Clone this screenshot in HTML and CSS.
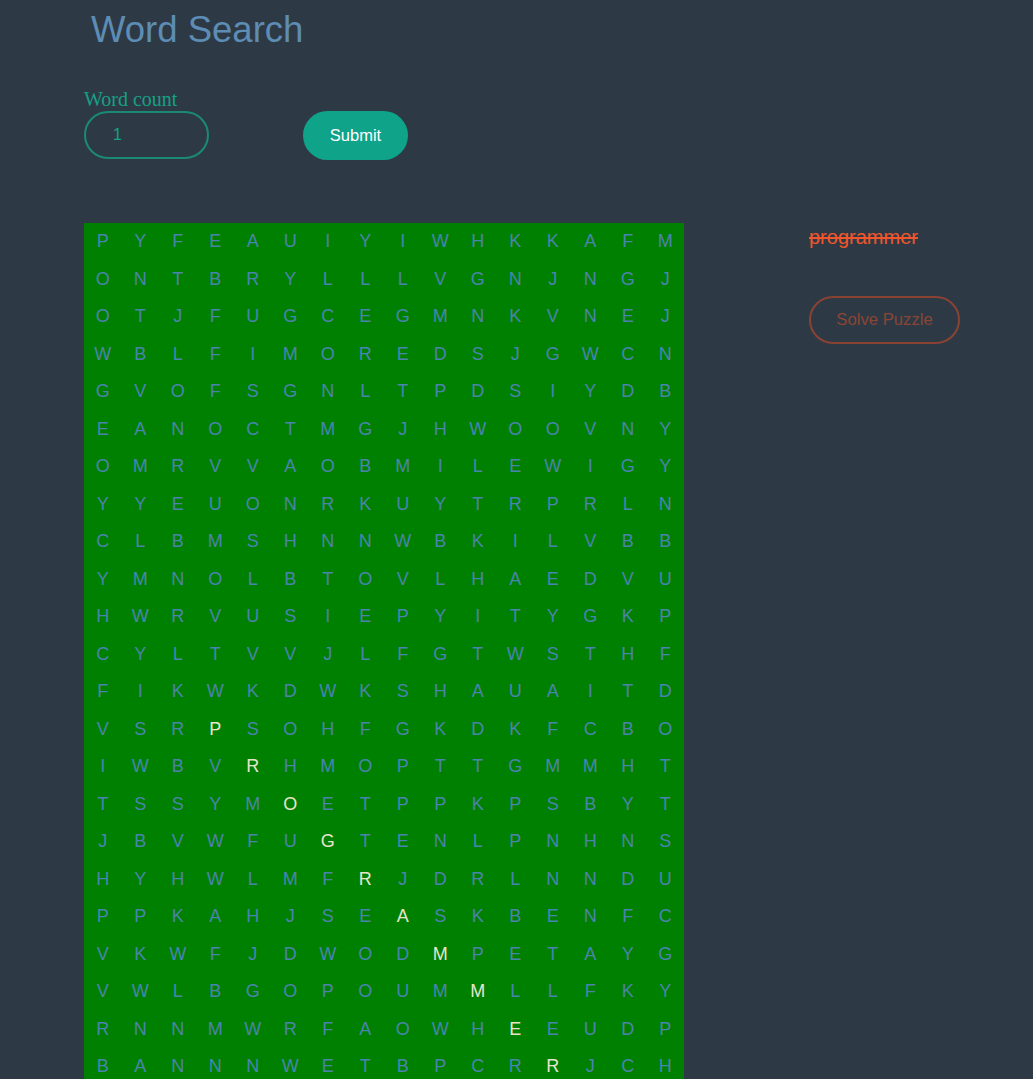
FILE: index.html
```html
<!DOCTYPE html>
<html lang="en">
<head>
<meta charset="utf-8">
<title>Word Search</title>
<link rel="stylesheet" href="styles.css">
</head>
<body>
<div class="page">
  <h1 class="title">Word Search</h1>
  <form class="controls">
    <label class="field-label" for="count">Word count</label>
    <div class="control-row">
      <input class="count-input" id="count" type="text" value="1">
      <button class="submit-btn" type="button">Submit</button>
    </div>
  </form>
  <div class="board">
    <div class="grid" id="grid"></div>
    <aside class="side">
      <ul class="words">
        <li class="word found">programmer</li>
      </ul>
      <button class="solve-btn" type="button">Solve Puzzle</button>
    </aside>
  </div>
</div>
<script src="app.js"></script>
</body>
</html>
```

FILE: styles.css
```css
html, body {
  margin: 0;
  padding: 0;
}
body {
  background: #2d3a45;
  font-family: "Liberation Sans", Arial, sans-serif;
  min-height: 1079px;
}
.page {
  padding-left: 84px;
}
.title {
  margin: 0;
  padding: 8px 0 0 7px;
  font-weight: normal;
  font-size: 36.5px;
  line-height: 43px;
  color: #5d8cb4;
}
.controls {
  margin-top: 37px;
  display: flex;
  flex-direction: column;
  align-items: flex-start;
}
.control-row {
  display: flex;
  align-items: flex-start;
  gap: 94px;
}
.field-label {
  display: block;
  font-family: "Liberation Serif", "Times New Roman", serif;
  font-size: 20px;
  line-height: 23px;
  color: #16a085;
}
.count-input {
  box-sizing: border-box;
  width: 125px;
  height: 48px;
  margin: 0;
  border: 2px solid #1a8a76;
  border-radius: 24px;
  background: transparent;
  color: #16a085;
  font-family: "Liberation Sans", Arial, sans-serif;
  font-size: 16px;
  padding: 0 0 0 27px;
  outline: none;
}
.submit-btn {
  box-sizing: border-box;
  width: 105px;
  height: 49px;
  margin: 0;
  border: none;
  border-radius: 25px;
  background: #0fa38a;
  color: #ffffff;
  font-family: "Liberation Sans", Arial, sans-serif;
  font-size: 16.5px;
  cursor: pointer;
}
.board {
  margin-top: 63px;
  display: flex;
  align-items: flex-start;
  gap: 125px;
}
.grid {
  display: grid;
  grid-template-columns: repeat(16, 37.5px);
  grid-auto-rows: 37.5px;
  width: 600px;
  background: #008000;
}
.cell {
  display: flex;
  align-items: center;
  justify-content: center;
  font-size: 18px;
  color: #4a84ae;
}
.cell.hit {
  color: #e6e5cc;
}
.side {
  padding-top: 3px;
}
.words {
  list-style: none;
  margin: 0;
  padding: 0;
}
.word {
  font-size: 20px;
  line-height: 23px;
  color: #f0552b;
}
.word.found {
  text-decoration: line-through;
}
.solve-btn {
  margin-top: 47px;
  box-sizing: border-box;
  width: 151px;
  height: 48px;
  border: 2px solid #8a4333;
  border-radius: 24px;
  background: transparent;
  color: #8b4535;
  font-family: "Liberation Sans", Arial, sans-serif;
  font-size: 16.7px;
  cursor: pointer;
}
```

FILE: app.js
```js
var rows = [
  "PYFEAUIYIWHKKAFM",
  "ONTBRYLLLVGNJNGJ",
  "OTJFUGCEGMNKVNEJ",
  "WBLFIMOREDSJGWCN",
  "GVOFSGNLTPDSIYDB",
  "EANOCTMGJHWOOVNY",
  "OMRVVAOBMILEWIGY",
  "YYEUONRKUYTRPRLN",
  "CLBMSHNNWBKILVBB",
  "YMNOLBTOVLHAEDVU",
  "HWRVUSIEPYITYGKP",
  "CYLTVVJLFGTWSTHF",
  "FIKWKDWKSHAUAITD",
  "VSRPSOHFGKDKFCBO",
  "IWBVRHMOPTTGMMHT",
  "TSSYMOETPPKPSBYT",
  "JBVWFUGTENLPNHNS",
  "HYHWLMFRJDRLNNDU",
  "PPKAHJSEASKBENFC",
  "VKWFJDWODMPETAYG",
  "VWLBGOPOUMMLLFKY",
  "RNNMWRFAOWHEEUDP",
  "BANNNWETBPCRRJCH"
];
var grid = document.getElementById("grid");
rows.forEach(function (row, r) {
  for (var c = 0; c < row.length; c++) {
    var d = document.createElement("div");
    d.className = "cell";
    if (r >= 13 && c === r - 10) d.className += " hit";
    d.textContent = row[c];
    grid.appendChild(d);
  }
});
```
